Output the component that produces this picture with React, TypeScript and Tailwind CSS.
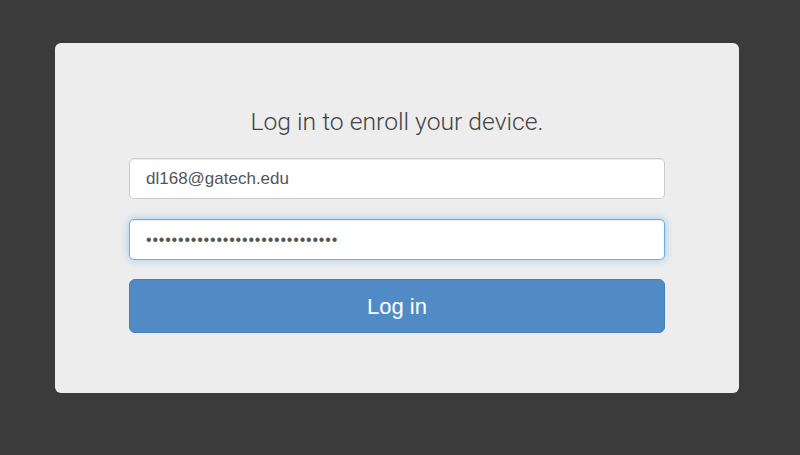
export default function App() {
  return (
    <div className="min-h-[455px] w-[800px] bg-[#3b3b3b] pt-[43px]" style={{ fontFamily: "'Liberation Sans', Arial, sans-serif" }}>
      <div className="ml-[55px] h-[350px] w-[684px] rounded-[6px] bg-[#ededed] px-[74px] pt-[63px]">
        <h1 className="h-8 text-center text-[24.7px] leading-8 font-light text-[#444]" style={{ fontFamily: "Roboto, 'Liberation Sans', sans-serif" }}>
          Log in to enroll your device.
        </h1>
        <form className="mt-5 flex flex-col" onSubmit={(e) => e.preventDefault()}>
          <input
            readOnly
            value="dl168@gatech.edu"
            className="h-[41px] w-full rounded-[5px] border border-[#cccccc] bg-white px-4 text-[17px] text-[#555] shadow-[inset_0_1px_1px_rgba(0,0,0,0.075)] outline-none"
          />
          <input
            readOnly
            type="password"
            value="passwordpasswordpasswordpasswo"
            className="mt-5 h-[41px] w-full rounded-[5px] border border-[#66afe9] bg-white px-4 text-[16px] tracking-[0.8px] text-[#555] shadow-[inset_0_1px_1px_rgba(0,0,0,0.075),0_0_8px_rgba(102,175,233,0.6)] outline-none"
          />
          <button
            type="submit"
            className="mt-[19px] h-[54px] w-full rounded-[6px] border border-[#4780b9] bg-[#518bc6] text-[22px] text-white"
          >
            Log in
          </button>
        </form>
      </div>
    </div>
  );
}
